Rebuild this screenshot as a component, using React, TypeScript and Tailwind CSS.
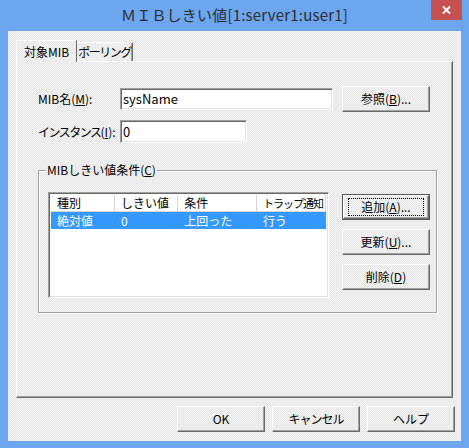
import React from "react";

const font = "font-['Noto_Sans_CJK_JP','Noto_Sans',sans-serif]";
const face = "bg-[repeating-conic-gradient(#f3f3f3_0_25%,#e7e7e7_0_50%)] bg-[length:2px_2px]";
const raised =
  "border border-t-white border-l-white border-r-[#696969] border-b-[#696969] shadow-[inset_-1px_-1px_0_#a0a0a0]";
const sunken =
  "border border-t-[#a0a0a0] border-l-[#a0a0a0] border-r-white border-b-white shadow-[inset_1px_1px_0_#696969,inset_-1px_-1px_0_#e3e3e3]";

function Btn({ children, isDefault = false, className = "" }: { children: React.ReactNode; isDefault?: boolean; className?: string }) {
  if (isDefault) {
    return (
      <div className={`h-[26px] w-[88px] border border-[#555] ${className}`}>
        <div className={`flex h-full w-full items-center justify-center ${raised} ${face}`}>
          <span className="flex h-[18px] w-[76px] items-center justify-center whitespace-nowrap border border-dotted border-black text-[12px] leading-none">
            {children}
          </span>
        </div>
      </div>
    );
  }
  return (
    <div className={`flex h-[26px] w-[88px] items-center justify-center whitespace-nowrap text-[12px] leading-none ${raised} ${face} ${className}`}>
      {children}
    </div>
  );
}

const cols = [
  { h: "種別", v: "絶対値", w: "w-[65px]", t: "" },
  { h: "しきい値", v: "0", w: "w-[64px]", t: "" },
  { h: "条件", v: "上回った", w: "w-[80px]", t: "" },
  { h: "トラップ通知", v: "行う", w: "w-[70px]", t: "text-[11px] tracking-[-1px]" },
];

export default function App() {
  return (
    <div className={`flex h-[448px] w-[469px] flex-col bg-[#6ba6ee] text-[#000] ${font}`}>
      {/* title bar */}
      <div className="relative flex h-[31px] items-center justify-center">
        <span className="-mt-[1px] whitespace-nowrap text-[15px] tracking-[0.2px] text-[#2d2d2d]">ＭＩＢしきい値[1:server1:user1]</span>
        <div className="absolute right-[7px] top-0 flex h-[20px] w-[31px] items-center justify-center bg-[#c75050]">
          <svg width="9" height="8" viewBox="0 0 9 8">
            <path d="M1 0.5 L8 7.5 M8 0.5 L1 7.5" stroke="white" strokeWidth="2" />
          </svg>
        </div>
      </div>

      {/* client area */}
      <div className={`mx-[8px] flex h-[410px] flex-col px-[8px] pt-[9px] ${face}`}>
        {/* tabs */}
        <div className="flex h-[21px] items-end whitespace-nowrap text-[12px]">
          <div className={`relative z-10 -mb-[1px] flex h-[22px] w-[61px] items-center justify-center border border-b-0 border-l-white border-r-[#696969] border-t-white ${face}`}>
            対象MIB
          </div>
          <div className={`flex h-[19px] w-[56px] items-center justify-center border border-b-0 border-l-0 border-r-[#696969] border-t-white tracking-[-1.5px] shadow-[inset_-1px_0_0_#a0a0a0] ${face}`}>
            ポーリング
          </div>
        </div>

        {/* tab panel */}
        <div className={`flex h-[337px] w-[437px] flex-col pl-[21px] pt-[24px] ${raised}`}>
          <div className="flex items-center">
            <span className="w-[82px] whitespace-nowrap text-[12px]">
              MIB名(<span className="underline">M</span>):
            </span>
            <div className={`flex h-[22px] w-[213px] items-center bg-white px-[2px] text-[13px] ${sunken}`}>sysName</div>
            <Btn className="ml-[9px]">
              参照(<span className="underline">B</span>)...
            </Btn>
          </div>
          <div className="mt-[8px] flex items-center">
            <span className="w-[82px] whitespace-nowrap text-[12px]">
              <span className="tracking-[-1.5px]">インスタンス</span>(<span className="underline">I</span>):
            </span>
            <div className={`flex h-[23px] w-[127px] items-center bg-white px-[2px] text-[13px] ${sunken}`}>0</div>
          </div>

          {/* group box */}
          <div className="relative mt-[27px] h-[143px] w-[399px] border border-[#a0a0a0] pl-[9px] pt-[21px] shadow-[1px_1px_0_white,inset_1px_1px_0_white]">
            <span className={`absolute -top-[9px] left-[7px] whitespace-nowrap px-[1px] text-[12px] leading-[16px] ${face}`}>
              MIBしきい値条件(<span className="underline">C</span>)
            </span>
            <div className="flex">
              <div className={`h-[106px] w-[281px] bg-white p-[2px] ${sunken}`}>
                <div className="flex h-[17px] whitespace-nowrap border-b border-[#d5d5d5] text-[12px]">
                  {cols.map((c, i) => (
                    <div key={i} className={`flex items-center overflow-hidden border-r border-[#d5d5d5] pl-[6px] ${c.w} ${c.t}`}>{c.h}</div>
                  ))}
                </div>
                <div className="flex h-[17px] whitespace-nowrap bg-[#3399ff] text-[12px] text-white">
                  {cols.map((c, i) => (
                    <div key={i} className={`flex items-center pl-[6px] ${c.w}`}>{c.v}</div>
                  ))}
                </div>
              </div>
              <div className="ml-[13px] mt-[2px] flex flex-col gap-[9px]">
                <Btn isDefault>
                  追加(<span className="underline">A</span>)...
                </Btn>
                <Btn>
                  更新(<span className="underline">U</span>)...
                </Btn>
                <Btn>
                  削除(<span className="underline">D</span>)
                </Btn>
              </div>
            </div>
          </div>
        </div>

        {/* bottom buttons */}
        <div className="mr-[-2px] mt-[8px] flex justify-end gap-[7px]">
          <Btn>OK</Btn>
          <Btn>
            <span className="tracking-[-1px]">キャンセル</span>
          </Btn>
          <Btn>ヘルプ</Btn>
        </div>
      </div>
    </div>
  );
}
